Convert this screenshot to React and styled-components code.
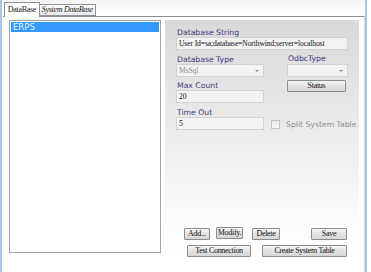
import React from "react";
import styled, { createGlobalStyle } from "styled-components";

const GlobalStyle = createGlobalStyle`
  html, body {
    margin: 0;
    padding: 0;
    background: #ffffff;
  }
`;

const Frame = styled.div`
  display: flex;
  width: 371px;
  height: 272px;
  background: #ffffff;
  overflow: hidden;
  font-family: "Liberation Serif", serif;
`;

const Edge = styled.div`
  width: 2px;
  background: #a9c6e6;
`;

const TabControl = styled.div`
  display: flex;
  flex-direction: column;
  width: 362px;
  margin-left: 1px;
`;

const TabStrip = styled.div`
  display: flex;
  align-items: flex-end;
  height: 16px;
  padding-left: 1px;
  background: linear-gradient(#f4f4f4, #ffffff);
`;

const Tab = styled.div`
  box-sizing: border-box;
  height: ${(p) => (p.$active ? 15 : 12)}px;
  width: ${(p) => p.$width}px;
  margin-bottom: ${(p) => (p.$active ? -1 : 0)}px;
  border: 1px solid #8e9198;
  border-bottom: ${(p) => (p.$active ? "none" : "1px solid #8e9198")};
  border-left: ${(p) => (p.$active ? "1px solid #8e9198" : "none")};
  background: ${(p) => (p.$active ? "#ffffff" : "linear-gradient(#fbfbfb, #ebebeb)")};
  font-size: 8px;
  letter-spacing: -0.3px;
  font-style: ${(p) => (p.$active ? "normal" : "italic")};
  color: #222;
  line-height: ${(p) => (p.$active ? 13 : 10)}px;
  text-align: center;
  white-space: nowrap;
  overflow: hidden;
  position: relative;
  z-index: 1;
`;

const TabPage = styled.div`
  flex: 1;
  display: flex;
  gap: 4px;
  border-top: 1px solid #8e9198;
  border-right: 1px solid #dadada;
  padding: 3px 0 0 6px;
`;

const ListBox = styled.div`
  box-sizing: border-box;
  width: 152px;
  height: 233px;
  border: 1px solid #a4a4a4;
  padding: 1px;
  background: #ffffff;
`;

const ListItem = styled.div`
  height: 10px;
  line-height: 10px;
  font-family: "DejaVu Sans", sans-serif;
  font-size: 8.5px;
  padding-left: 2px;
  color: ${(p) => (p.$selected ? "#e8f2ff" : "#000")};
  background: ${(p) => (p.$selected ? "#3399ff" : "transparent")};
`;

const Panel = styled.div`
  box-sizing: border-box;
  width: 194px;
  height: 243px;
  display: flex;
  flex-direction: column;
  padding: 9px 11px 6px 11px;
  background: linear-gradient(#d9d9d9 0%, #ebebeb 45%, #fbfbfb 80%, #ffffff 100%);
`;

const Label = styled.div`
  font-family: "DejaVu Sans", "Liberation Sans", sans-serif;
  font-size: 7.7px;
  line-height: 8px;
  height: 8px;
  padding-left: 1px;
  color: ${(p) => (p.$muted ? "#8d8d8d" : "#3a3a82")};
  white-space: nowrap;
  flex-shrink: 0;
`;

const TextBox = styled.div`
  box-sizing: border-box;
  width: ${(p) => p.$width}px;
  height: 13px;
  border: 1px solid #d2d2d2;
  background: #f3f3f3;
  font-size: 7.6px;
  letter-spacing: -0.12px;
  line-height: 11px;
  padding-left: 2px;
  color: #111;
  white-space: nowrap;
  overflow: hidden;
`;

const Combo = styled(TextBox)`
  display: flex;
  justify-content: space-between;
  align-items: center;
  color: #8f8f8f;
  padding-right: 4px;
  margin-top: ${(p) => p.$top || 0}px;
`;

const Arrow = styled.span`
  width: 0;
  height: 0;
  border-left: 2px solid transparent;
  border-right: 2px solid transparent;
  border-top: 2px solid #8a8a8a;
`;

const Grid = styled.div`
  display: grid;
  grid-template-columns: 88px 84px;
  margin-top: ${(p) => p.$top}px;
`;

const Cell = styled.div`
  display: flex;
  flex-direction: column;
  padding-left: ${(p) => p.$pad || 0}px;
  justify-content: ${(p) => (p.$end ? "flex-end" : "flex-start")};
  margin-top: ${(p) => p.$shift || 0}px;
`;

const Button = styled.button`
  box-sizing: border-box;
  width: ${(p) => p.$width}px;
  height: 12px;
  margin: 0;
  margin-left: ${(p) => p.$left || 0}px;
  margin-top: ${(p) => (p.$up ? -1 : 0)}px;
  padding: 0;
  border: 1px solid #8c8c8c;
  border-radius: 1px;
  background: linear-gradient(#f6f6f6, #e2e2e2 50%, #d6d6d6);
  font-family: "Liberation Serif", serif;
  font-size: 8px;
  letter-spacing: -0.3px;
  line-height: 10px;
  color: #111;
  white-space: nowrap;
`;

const CheckRow = styled.div`
  display: flex;
  align-items: center;
  gap: 5px;
  padding-bottom: 1px;
`;

const CheckBox = styled.span`
  box-sizing: border-box;
  flex-shrink: 0;
  width: 9px;
  height: 9px;
  border: 1px solid #c4c4c4;
  background: linear-gradient(#e8e8e8, #fafafa);
`;

const Buttons = styled.div`
  margin-top: auto;
  display: flex;
  flex-direction: column;
  gap: 5px;
`;

const ButtonRow = styled.div`
  display: flex;
  align-items: flex-start;
  padding-left: ${(p) => p.$pad}px;
`;

export default function App() {
  return (
    <>
      <GlobalStyle />
      <Frame>
        <Edge />
        <TabControl>
          <TabStrip>
            <Tab $active $width={36}>DataBase</Tab>
            <Tab $width={56}>System DataBase</Tab>
          </TabStrip>
          <TabPage>
            <ListBox>
              <ListItem $selected>ERPS</ListItem>
            </ListBox>
            <Panel>
              <Label>Database String</Label>
              <TextBox $width={172}>User Id=sa;database=Northwind;server=localhost</TextBox>

              <Grid $top={6}>
                <Cell>
                  <Label>Database Type</Label>
                  <Combo $width={88}>
                    MsSql
                    <Arrow />
                  </Combo>
                </Cell>
                <Cell $pad={23} $shift={-1}>
                  <Label>OdbcType</Label>
                  <Combo $width={61} $top={1}>
                    <span />
                    <Arrow />
                  </Combo>
                </Cell>
              </Grid>

              <Grid $top={5}>
                <Cell>
                  <Label>Max Count</Label>
                  <TextBox $width={88}>20</TextBox>
                </Cell>
                <Cell $pad={23} $shift={-2}>
                  <Button $width={59}>Status</Button>
                </Cell>
              </Grid>

              <Grid $top={6}>
                <Cell>
                  <Label>Time Out</Label>
                  <TextBox $width={88}>5</TextBox>
                </Cell>
                <Cell $pad={7} $end>
                  <CheckRow>
                    <CheckBox />
                    <Label $muted>Split System Table</Label>
                  </CheckRow>
                </Cell>
              </Grid>

              <Buttons>
                <ButtonRow $pad={8}>
                  <Button $width={26}>Add...</Button>
                  <Button $width={27} $left={6} $up>Modify.</Button>
                  <Button $width={28} $left={9}>Delete</Button>
                  <Button $width={36} $left={31}>Save</Button>
                </ButtonRow>
                <ButtonRow $pad={11}>
                  <Button $width={64}>Test Connection</Button>
                  <Button $width={85} $left={11}>Create System Table</Button>
                </ButtonRow>
              </Buttons>
            </Panel>
          </TabPage>
        </TabControl>
        <Edge />
      </Frame>
    </>
  );
}
